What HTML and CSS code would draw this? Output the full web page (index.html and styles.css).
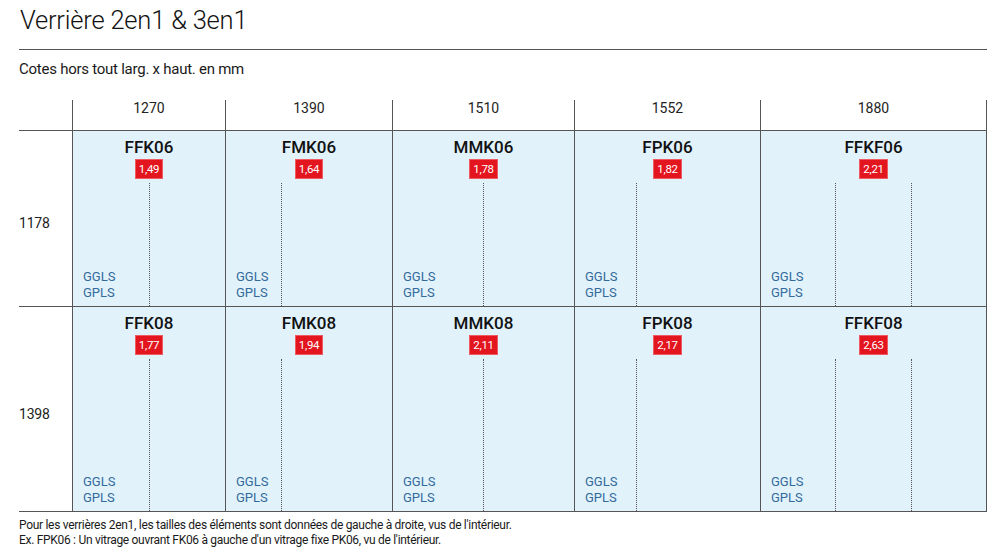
FILE: index.html
```html
<!DOCTYPE html>
<html lang="fr">
<head>
<meta charset="utf-8">
<title>Verrière 2en1 &amp; 3en1</title>
<link rel="stylesheet" href="styles.css">
</head>
<body>
<div class="page">
  <h1 class="title">Verrière 2en1 &amp; 3en1</h1>
  <p class="subtitle">Cotes hors tout larg. x haut. en mm</p>

  <div class="table">
    <div class="corner"></div>
    <div class="colhead">1270</div>
    <div class="colhead">1390</div>
    <div class="colhead">1510</div>
    <div class="colhead">1552</div>
    <div class="colhead last">1880</div>

    <div class="rowhead">1178</div>
    <div class="cell">
      <div class="code">FFK06</div><div class="price">1,49</div>
      <div class="panes"><div class="pane first"><div class="labels">GGLS<br>GPLS</div></div><div class="pane"></div></div>
    </div>
    <div class="cell">
      <div class="code">FMK06</div><div class="price">1,64</div>
      <div class="panes"><div class="pane first"><div class="labels">GGLS<br>GPLS</div></div><div class="pane double"></div></div>
    </div>
    <div class="cell">
      <div class="code">MMK06</div><div class="price">1,78</div>
      <div class="panes"><div class="pane first"><div class="labels">GGLS<br>GPLS</div></div><div class="pane"></div></div>
    </div>
    <div class="cell">
      <div class="code">FPK06</div><div class="price">1,82</div>
      <div class="panes"><div class="pane first"><div class="labels">GGLS<br>GPLS</div></div><div class="pane double"></div></div>
    </div>
    <div class="cell last">
      <div class="code">FFKF06</div><div class="price">2,21</div>
      <div class="panes"><div class="pane first"><div class="labels">GGLS<br>GPLS</div></div><div class="pane"></div><div class="pane"></div></div>
    </div>

    <div class="rowhead bottom">1398</div>
    <div class="cell bottom">
      <div class="code">FFK08</div><div class="price">1,77</div>
      <div class="panes"><div class="pane first"><div class="labels">GGLS<br>GPLS</div></div><div class="pane"></div></div>
    </div>
    <div class="cell bottom">
      <div class="code">FMK08</div><div class="price">1,94</div>
      <div class="panes"><div class="pane first"><div class="labels">GGLS<br>GPLS</div></div><div class="pane double"></div></div>
    </div>
    <div class="cell bottom">
      <div class="code">MMK08</div><div class="price">2,11</div>
      <div class="panes"><div class="pane first"><div class="labels">GGLS<br>GPLS</div></div><div class="pane"></div></div>
    </div>
    <div class="cell bottom">
      <div class="code">FPK08</div><div class="price">2,17</div>
      <div class="panes"><div class="pane first"><div class="labels">GGLS<br>GPLS</div></div><div class="pane double"></div></div>
    </div>
    <div class="cell bottom last">
      <div class="code">FFKF08</div><div class="price">2,63</div>
      <div class="panes"><div class="pane first"><div class="labels">GGLS<br>GPLS</div></div><div class="pane"></div><div class="pane"></div></div>
    </div>
  </div>

  <p class="note">Pour les verrières 2en1, les tailles des éléments sont données de gauche à droite, vus de l'intérieur.<br>Ex. FPK06 : Un vitrage ouvrant FK06 à gauche d'un vitrage fixe PK06, vu de l'intérieur.</p>
</div>
</body>
</html>
```

FILE: styles.css
```css
html, body {
  margin: 0;
  padding: 0;
  background: #ffffff;
}

body {
  font-family: Roboto, "Liberation Sans", sans-serif;
  color: #1a1a1a;
}

.page {
  width: 968px;
  padding: 0 13px 0 19px;
}

.title {
  margin: 0;
  padding: 5px 0 14px 1px;
  font-weight: 300;
  font-size: 25.5px;
  line-height: 30px;
  letter-spacing: -0.2px;
  color: #111;
  border-bottom: 1px solid #555;
}

.subtitle {
  margin: 10px 0 22px 0;
  font-size: 15px;
  line-height: 18px;
  letter-spacing: -0.25px;
  color: #1a1a1a;
}

.table {
  display: grid;
  grid-template-columns: 53px 153px 167px 182px 186px 227px;
  grid-template-rows: 30px 176px 206px;
}

.colhead {
  border-left: 1px solid #555;
  text-align: center;
  font-size: 14px;
  line-height: 16px;
  padding-top: 0;
  color: #222;
}

.colhead.last {
  border-right: 1px solid #555;
}

.rowhead {
  border-top: 1px solid #555;
  display: flex;
  align-items: center;
  padding-top: 9px;
  font-size: 14px;
  line-height: 16px;
  letter-spacing: -0.2px;
  color: #222;
}

.cell {
  border-top: 1px solid #555;
  border-left: 1px solid #555;
  background: #e1f2fb;
  display: flex;
  flex-direction: column;
  align-items: stretch;
  padding-top: 6px;
}

.cell.last {
  border-right: 1px solid #555;
}

.bottom {
  border-bottom: 1px solid #555;
}

.code {
  text-align: center;
  font-weight: 500;
  font-size: 17px;
  line-height: 20px;
  color: #111;
}

.price {
  align-self: center;
  margin-top: 2px;
  height: 20px;
  line-height: 20px;
  padding: 0 4px;
  background: #e3161f;
  color: #fff;
  font-size: 11.5px;
  letter-spacing: -0.3px;
  box-shadow: inset 0 0 0 1px #f05a62;
}

.panes {
  flex: 1;
  margin-top: 4px;
  display: flex;
}

.pane {
  flex: 1 1 0;
}

.pane + .pane {
  border-left: 1px dotted #555;
}

.pane.double {
  flex-grow: 2;
}

.pane.first {
  display: flex;
  flex-direction: column;
  justify-content: flex-end;
}

.labels {
  padding: 0 0 6px 10px;
  font-size: 13px;
  line-height: 15.5px;
  color: #336a9c;
  white-space: nowrap;
}

.note {
  margin: 6px 0 0 0;
  font-size: 12px;
  line-height: 15px;
  letter-spacing: -0.3px;
  color: #1a1a1a;
}
```
